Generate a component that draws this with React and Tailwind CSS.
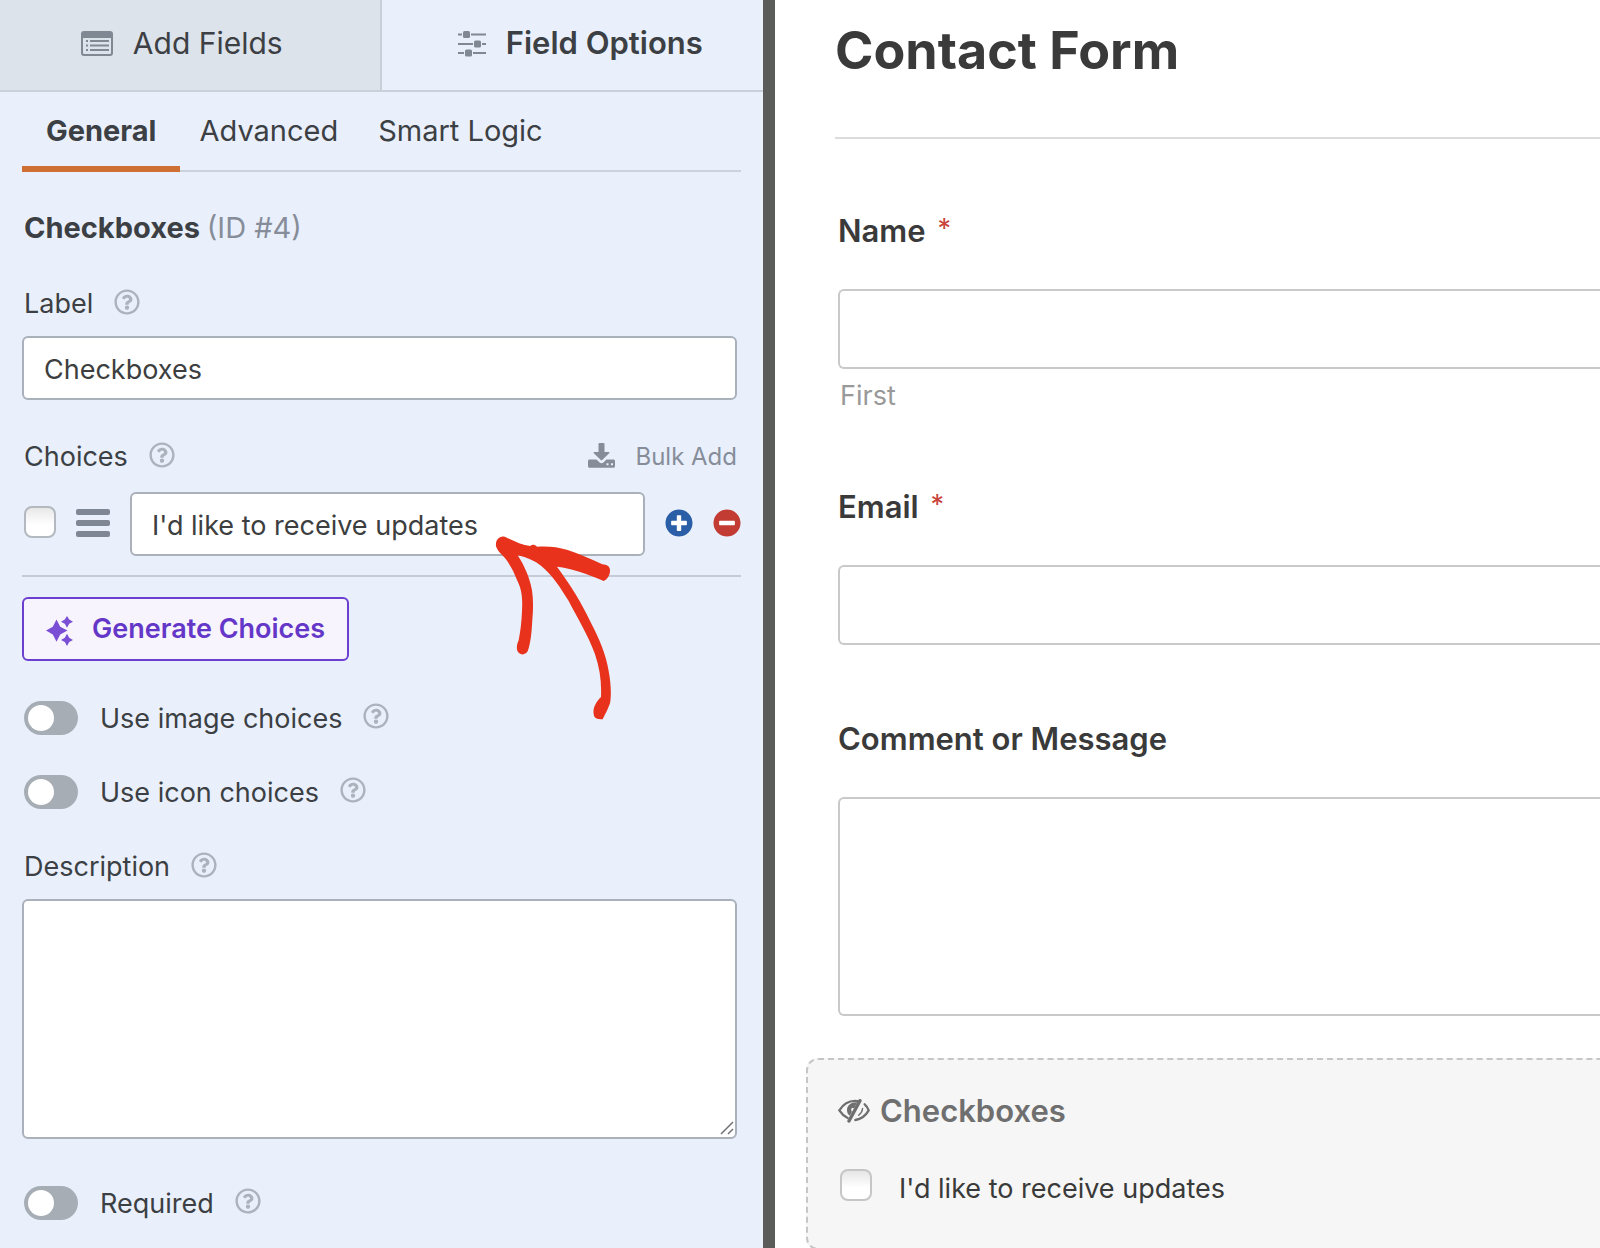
import { FaRegQuestionCircle, FaPlusCircle, FaMinusCircle } from "react-icons/fa";

const inputClass =
  "block w-full rounded-md border-2 border-[#aab1bb] bg-white px-5 pt-[2px] text-[27px] text-[#3c3e40] outline-none";

const fieldClass =
  "mt-[38px] block w-full rounded-l-md border-2 border-r-0 border-[#c9c9c9] bg-white px-5 text-[27px] outline-none";

function Help({ label }) {
  return (
    <button type="button" aria-label={`Help: ${label}`} className="mb-1 ml-[21px] cursor-pointer">
      <FaRegQuestionCircle className="size-[26px] text-[#abb3bd]" />
    </button>
  );
}

function Toggle({ id, label, className }) {
  return (
    <div className={`flex h-9 items-center ${className}`}>
      <input id={id} type="checkbox" className="peer sr-only" />
      <label htmlFor={id} className="flex cursor-pointer items-center">
        <span className="ml-[2px] flex h-[34px] w-[54px] items-center rounded-full bg-[#a6adb5] px-1">
          <span className="size-[26px] rounded-full bg-white" />
        </span>
        <span className="ml-[22px] pt-[2px] text-[27px] leading-9">{label}</span>
      </label>
      <Help label={label} />
    </div>
  );
}

function Required() {
  return <span className="ml-1 align-[4px] text-[27px] leading-none font-normal text-[#c9433b]">*</span>;
}

function FieldsIcon() {
  return (
    <svg viewBox="0 0 32 25" className="h-[25px] w-8 text-[#808894]" fill="currentColor" aria-hidden="true">
      <path
        fillRule="evenodd"
        d="M3 0h26a3 3 0 0 1 3 3v19a3 3 0 0 1-3 3H3a3 3 0 0 1-3-3V3a3 3 0 0 1 3-3zM2 7v15a1 1 0 0 0 1 1h26a1 1 0 0 0 1-1V7z"
      />
      <path d="M5 9h2v2H5zM9 9h19v2H9zM5 13.500h2v2H5zM9 13.500h19v2H9zM5 18h2v2H5zM9 18h19v2H9z" />
    </svg>
  );
}

function OptionsIcon() {
  return (
    <svg viewBox="0 0 28 26" className="mt-[2px] h-[26px] w-7 text-[#808894]" fill="currentColor" aria-hidden="true">
      <path d="M0 2.500h28v2H0zM0 12h28v2H0zM0 21h28v2H0z" />
      <rect x="5" y="0" width="7" height="7" rx="1.500" />
      <rect x="16" y="9.500" width="7" height="7" rx="1.500" />
      <rect x="7" y="18.500" width="7" height="7" rx="1.500" />
      <path d="M4 2h1v3H4zM12 2h1v3h-1zM15 11.500h1v3h-1zM23 11.500h1v3h-1zM6 20.500h1v3H6zM14 20.500h1v3h-1z" fill="#e9f0fc" />
    </svg>
  );
}

function BulkIcon() {
  return (
    <svg viewBox="0 0 27 25" className="mb-1 h-[25px] w-[27px]" fill="currentColor" aria-hidden="true">
      <path d="M10.500 1a1 1 0 0 1 1-1h4a1 1 0 0 1 1 1v8h4.200c.7 0 1 .8.500 1.300l-7 6.700a1 1 0 0 1-1.400 0l-7-6.700C5.300 9.800 5.600 9 6.300 9h4.200z" />
      <path
        fillRule="evenodd"
        d="M1.500 16.500h7l2.800 2.700a3.200 3.200 0 0 0 4.400 0l2.800-2.700h7c.8 0 1.500.7 1.500 1.500v5.200c0 .8-.7 1.500-1.500 1.500h-24C.7 24.700 0 24 0 23.200V18c0-.8.7-1.500 1.500-1.500zM18.500 20.200v2h2v-2zM23 20.200v2h2v-2z"
      />
    </svg>
  );
}

function SparkleIcon() {
  return (
    <svg viewBox="0 0 27 30" className="mt-1 h-[30px] w-[27px] text-[#7a4fd6]" fill="currentColor" aria-hidden="true">
      <path d="M10.500 3.500l3.700 7.300 7.300 3.700-7.300 3.900-3.700 7.300-3.700-7.300L0 14.500l6.800-3.700z" />
      <path d="M21 0l2.200 3.600 3.800 2.100-3.800 2.100-2.200 4-2.200-4L15 5.700l3.800-2.100zM21 17.800l2.200 4 3.800 2.100-3.800 2.100-2.200 4-2.200-4-3.800-2.100 3.800-2.100z" />
    </svg>
  );
}

function HiddenIcon() {
  return (
    <svg viewBox="0 0 96 72" className="h-6 w-8" fill="none" stroke="currentColor" strokeWidth="7" strokeLinecap="round" aria-hidden="true">
      <path d="M64 7C38 2 17 13 4 34c7 11 15 18 25 23" />
      <path d="M80 16c6 5 9 10 12 18-10 18-23 26-40 29" />
      <path d="M66 5L33 66" strokeWidth="10" />
      <path d="M74 28c-1 9-5 15-12 21" strokeWidth="4" />
      <path d="M58 10c-17-2-31 9-31 22 0 8 2 13 8 18L42 38c-4-4-3-9 1-12 3 3 8 1 8-4z" fill="currentColor" stroke="none" />
    </svg>
  );
}

function Arrow() {
  return (
    <svg
      viewBox="345 340 348 570"
      className="pointer-events-none absolute top-[41px] right-[34px] h-[190px] w-[116px]"
      fill="#e8321c"
      aria-hidden="true"
    >
      <path d="M374 351C356 348 346 362 348 380C354 397 369 408 379 420C392 439 403 459 411 481C426 511 428 535 426 574C425 606 421 636 416 662C409 677 408 693 417 700C425 707 437 705 443 695C452 670 455 638 457 600C460 565 460 540 456 512C448 470 432 436 413 407C441 413 465 424 483 438C515 464 541 502 566 544C591 593 625 647 645 704C659 745 665 785 663 832C649 846 638 864 641 883C642 895 650 899 668 899C675 885 684 868 690 851C695 824 692 785 686 754C678 704 657 656 632 608C606 551 570 494 531 441C575 446 625 463 671 484C682 479 691 466 690 450C688 439 680 435 667 434C632 418 596 401 563 391C532 382 506 379 471 381C464 374 456 374 451 379C425 376 400 363 374 351Z" />
    </svg>
  );
}

function Sidebar() {
  return (
    <aside className="w-[775px] shrink-0 border-r-[12px] border-[#5a5c5a] bg-[#e9f0fc] text-[#3c3f43]">
      {/* PANEL TABS */}
      <div className="grid h-[92px] grid-cols-2 border-b-2 border-[#c9d0da] text-[30px]">
        <button
          type="button"
          className="flex items-center justify-center gap-5 border-r-2 border-[#c9d0da] bg-[#dce3eb] pr-4 pb-1"
        >
          <FieldsIcon />
          Add Fields
        </button>
        <button type="button" className="flex items-center justify-center gap-5 pb-1 pl-4 text-[31px] font-semibold">
          <OptionsIcon />
          Field Options
        </button>
      </div>

      <div className="px-[22px]">
        {/* SECTION TABS */}
        <nav className="flex h-20 border-b-2 border-[#cbd2dd] text-[29px]">
          <button
            type="button"
            className="-mb-[2px] border-b-[6px] border-[#cf6f33] px-6 pt-1 font-bold"
          >
            General
          </button>
          <button type="button" className="px-[19px]">
            Advanced
          </button>
          <button type="button" className="px-[21px]">
            Smart Logic
          </button>
        </nav>

        <h2 className="mt-9 ml-[2px] text-[29px] leading-10 font-bold">
          Checkboxes <span className="font-normal text-[#868d99]">(ID #4)</span>
        </h2>

        {/* LABEL */}
        <div className="mt-[38px] ml-[2px] flex h-9 items-center text-[27px]">
          <label htmlFor="field-label">Label</label>
          <Help label="Label" />
        </div>
        <div className="mt-[14px] pr-1">
          <input id="field-label" defaultValue="Checkboxes" className={`${inputClass} h-16`} />
        </div>

        {/* CHOICES */}
        <div className="mt-[39px] ml-[2px] flex h-9 items-center pr-1 text-[27px]">
          <span>Choices</span>
          <Help label="Choices" />
          <button type="button" className="ml-auto flex items-center gap-5 text-[24px] text-[#868d99]">
            <BulkIcon />
            Bulk Add
          </button>
        </div>
        <div className="mt-[17px] flex items-center border-b-2 border-[#c5ccd7] pb-[19px]">
          <input
            type="checkbox"
            aria-label="Selected by default"
            className="mb-1 ml-[2px] size-8 appearance-none rounded-lg border-2 border-[#b4b9c0] bg-linear-to-b from-[#e8e8e8] to-white to-60%"
          />
          <button type="button" aria-label="Reorder" className="mb-[2px] ml-5 flex w-[34px] flex-col gap-[5px]">
            <span className="h-[6px] w-full rounded-xs bg-[#7f8794]" />
            <span className="h-[6px] w-full rounded-xs bg-[#7f8794]" />
            <span className="h-[6px] w-full rounded-xs bg-[#7f8794]" />
          </button>
          <div className="relative ml-5 flex-1">
            <input aria-label="Choice" defaultValue="I'd like to receive updates" className={`${inputClass} h-16`} />
            <Arrow />
          </div>
          <button type="button" aria-label="Add choice" className="mb-[2px] ml-5">
            <FaPlusCircle className="size-7 rounded-full bg-[radial-gradient(white_50%,transparent_50%)] text-[#2a5fa8]" />
          </button>
          <button type="button" aria-label="Remove choice" className="mb-[2px] ml-5">
            <FaMinusCircle className="size-7 rounded-full bg-[radial-gradient(white_50%,transparent_50%)] text-[#c23c34]" />
          </button>
        </div>
        <button
          type="button"
          className="mt-5 flex h-16 items-center gap-[19px] rounded-md border-2 border-[#6b3fd0] bg-[#f7f4fd] px-[22px] text-[27px] font-semibold text-[#6437c8]"
        >
          <SparkleIcon />
          Generate Choices
        </button>

        <Toggle id="image-choices" label="Use image choices" className="mt-[39px]" />
        <Toggle id="icon-choices" label="Use icon choices" className="mt-[38px]" />

        {/* DESCRIPTION */}
        <div className="mt-[39px] ml-[2px] flex h-9 items-center text-[27px]">
          <label htmlFor="description">Description</label>
          <Help label="Description" />
        </div>
        <div className="relative mt-[14px] pr-1">
          <textarea id="description" className={`${inputClass} h-60 resize-none`} />
          <svg
            viewBox="0 0 14 14"
            className="pointer-events-none absolute right-[7px] bottom-1 size-[14px]"
            stroke="#6f7377"
            strokeWidth="1.500"
            aria-hidden="true"
          >
            <path d="M1 13L13 1M8 13L13 8" />
          </svg>
        </div>

        <Toggle id="required" label="Required" className="mt-[46px]" />
      </div>
    </aside>
  );
}

function Preview() {
  return (
    <main className="min-w-0 flex-1 bg-white pt-[19px] text-[#3a3a3a]">
      <h1 className="ml-[60px] border-b-2 border-[#dcdcdc] pb-[54px] text-[52px] leading-16 font-bold">
        Contact Form
      </h1>

      <form className="ml-[63px]">
        <label htmlFor="name" className="mt-[72px] block h-10 text-[31px] leading-10 font-semibold">
          Name <Required />
        </label>
        <input id="name" className={`${fieldClass} h-20`} />
        <p className="mt-[9px] ml-[2px] text-[27px] leading-9 text-[#999999]">First</p>

        <label htmlFor="email" className="mt-[73px] block h-10 text-[31px] leading-10 font-semibold">
          Email <Required />
        </label>
        <input id="email" type="email" className={`${fieldClass} h-20`} />

        <label htmlFor="message" className="mt-[74px] block h-10 text-[31px] leading-10 font-semibold">
          Comment or Message
        </label>
        <textarea id="message" className={`${fieldClass} h-[219px] resize-none`} />
      </form>

      {/* SELECTED FIELD */}
      <section className="mt-[42px] ml-[31px] h-48 rounded-l-xl border-2 border-r-0 border-dashed border-[#c6c6c6] bg-[#f6f6f6] pt-[31px] pl-[30px]">
        <h3 className="flex items-center gap-[10px] text-[31px] leading-10 font-semibold text-[#6f6f6f]">
          <HiddenIcon />
          Checkboxes
        </h3>
        <label className="mt-[38px] ml-[2px] flex items-start gap-[27px] text-[27px] leading-9">
          <input
            type="checkbox"
            className="size-8 appearance-none rounded-lg border-2 border-[#c6c6c6] bg-linear-to-b from-[#e6e6e6] to-white to-60%"
          />
          <span className="pt-[2px]">I'd like to receive updates</span>
        </label>
      </section>
    </main>
  );
}

export default function App() {
  return (
    <div className="flex h-screen overflow-hidden font-[Inter,sans-serif]">
      <Sidebar />
      <Preview />
    </div>
  );
}
